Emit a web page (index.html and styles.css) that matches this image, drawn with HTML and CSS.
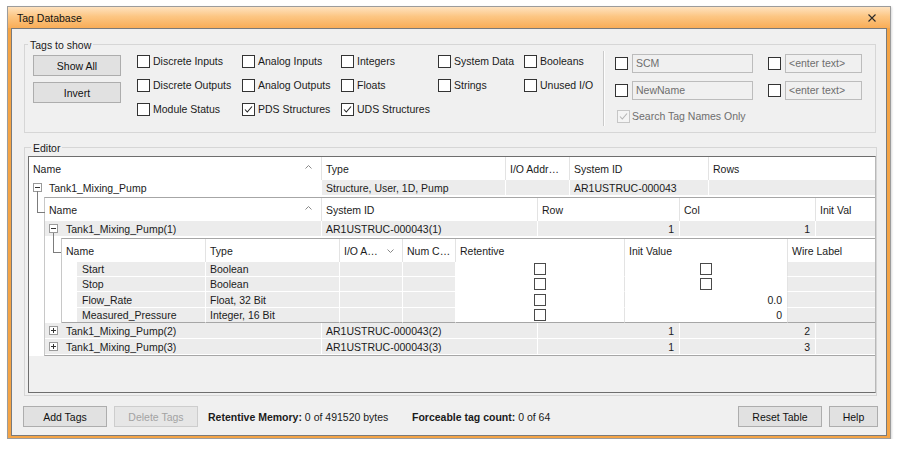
FILE: index.html
```html
<!DOCTYPE html>
<html>
<head>
<meta charset="utf-8">
<title>Tag Database</title>
<link rel="stylesheet" href="styles.css">
</head>
<body>
<div class="window">
  <div class="titlebar">
    <span class="title">Tag Database</span>
    <svg class="close" width="8" height="8" viewBox="0 0 8 8"><path d="M0.5 0.5L7.5 7.5M7.5 0.5L0.5 7.5" stroke="#2a2a2a" stroke-width="1.1"/></svg>
  </div>
  <div class="client">
    <div class="group tags">
      <div class="gtitle">Tags to show</div>
      <div class="tags-body">
        <div class="btncol">
          <button class="btn">Show All</button>
          <button class="btn">Invert</button>
        </div>
        <div class="checks">
          <label class="chk"><span class="box"></span>Discrete Inputs</label>
          <label class="chk"><span class="box"></span>Analog Inputs</label>
          <label class="chk"><span class="box"></span>Integers</label>
          <label class="chk"><span class="box"></span>System Data</label>
          <label class="chk"><span class="box"></span>Booleans</label>
          <label class="chk"><span class="box"></span>Discrete Outputs</label>
          <label class="chk"><span class="box"></span>Analog Outputs</label>
          <label class="chk"><span class="box"></span>Floats</label>
          <label class="chk"><span class="box"></span>Strings</label>
          <label class="chk"><span class="box"></span>Unused I/O</label>
          <label class="chk"><span class="box"></span>Module Status</label>
          <label class="chk"><span class="box"><svg width="11" height="11" viewBox="0 0 11 11"><path d="M2 5.5L4.3 8L9 2.5" fill="none" stroke="#222" stroke-width="1.1"/></svg></span>PDS Structures</label>
          <label class="chk"><span class="box"><svg width="11" height="11" viewBox="0 0 11 11"><path d="M2 5.5L4.3 8L9 2.5" fill="none" stroke="#222" stroke-width="1.1"/></svg></span>UDS Structures</label>
        </div>
        <div class="sep"></div>
        <div class="search">
          <div class="srow"><span class="box"></span><span class="field w1">SCM</span><span class="box gapbox"></span><span class="field w2">&lt;enter text&gt;</span></div>
          <div class="srow"><span class="box"></span><span class="field w1">NewName</span><span class="box gapbox"></span><span class="field w2">&lt;enter text&gt;</span></div>
          <div class="srow last"><span class="box dis"><svg width="11" height="11" viewBox="0 0 11 11"><path d="M2 5.5L4.3 8L9 2.5" fill="none" stroke="#b4b4b4" stroke-width="1.1"/></svg></span><span class="dimtext">Search Tag Names Only</span></div>
        </div>
      </div>
    </div>

    <div class="group editor">
      <div class="gtitle">Editor</div>
      <div class="grid">
        <div class="l1 hrow">
          <div class="hcell sorted">Name<svg width="7" height="4" viewBox="0 0 7 4"><path d="M0.5 3.5L3.5 0.5L6.5 3.5" fill="none" stroke="#888"/></svg></div>
          <div class="hcell">Type</div>
          <div class="hcell">I/O Addr…</div>
          <div class="hcell">System ID</div>
          <div class="hcell">Rows</div>
        </div>
        <div class="l1 drow">
          <div class="dcell white"><svg class="tg" width="9" height="9" viewBox="0 0 9 9"><rect x="0.5" y="0.5" width="8" height="8" fill="#fff" stroke="#9a9a9a"/><path d="M2 4.5H7" stroke="#333"/></svg>Tank1_Mixing_Pump</div>
          <div class="dcell">Structure, User, 1D, Pump</div>
          <div class="dcell"></div>
          <div class="dcell">AR1USTRUC-000043</div>
          <div class="dcell"></div>
        </div>
        <div class="detail d1">
          <div class="level2">
            <div class="l2 hrow">
              <div class="hcell sorted">Name<svg width="7" height="4" viewBox="0 0 7 4"><path d="M0.5 3.5L3.5 0.5L6.5 3.5" fill="none" stroke="#888"/></svg></div>
              <div class="hcell">System ID</div>
              <div class="hcell">Row</div>
              <div class="hcell">Col</div>
              <div class="hcell">Init Val</div>
            </div>
            <div class="l2 drow">
              <div class="dcell"><svg class="tg2" width="9" height="9" viewBox="0 0 9 9"><rect x="0.5" y="0.5" width="8" height="8" fill="#fff" stroke="#9a9a9a"/><path d="M2 4.5H7" stroke="#333"/></svg>Tank1_Mixing_Pump(1)</div>
              <div class="dcell">AR1USTRUC-000043(1)</div>
              <div class="dcell num">1</div>
              <div class="dcell num">1</div>
              <div class="dcell"></div>
            </div>
            <div class="detail d2">
              <div class="level3">
                <div class="l3 hrow">
                  <div class="hcell">Name</div>
                  <div class="hcell">Type</div>
                  <div class="hcell sorted down">I/O A…<svg width="7" height="4" viewBox="0 0 7 4"><path d="M0.5 0.5L3.5 3.5L6.5 0.5" fill="none" stroke="#888"/></svg></div>
                  <div class="hcell">Num C…</div>
                  <div class="hcell">Retentive</div>
                  <div class="hcell">Init Value</div>
                  <div class="hcell">Wire Label</div>
                </div>
                <div class="l3 drow r15">
                  <div class="dcell indent">Start</div>
                  <div class="dcell">Boolean</div>
                  <div class="dcell"></div>
                  <div class="dcell"></div>
                  <div class="dcell wcell center"><span class="gbox"></span></div>
                  <div class="dcell wcell center"><span class="gbox"></span></div>
                  <div class="dcell"></div>
                </div>
                <div class="l3 drow r15">
                  <div class="dcell indent">Stop</div>
                  <div class="dcell">Boolean</div>
                  <div class="dcell"></div>
                  <div class="dcell"></div>
                  <div class="dcell wcell center"><span class="gbox"></span></div>
                  <div class="dcell wcell center"><span class="gbox"></span></div>
                  <div class="dcell"></div>
                </div>
                <div class="l3 drow r16">
                  <div class="dcell indent">Flow_Rate</div>
                  <div class="dcell">Float, 32 Bit</div>
                  <div class="dcell"></div>
                  <div class="dcell"></div>
                  <div class="dcell wcell center"><span class="gbox"></span></div>
                  <div class="dcell wcell num">0.0</div>
                  <div class="dcell"></div>
                </div>
                <div class="l3 drow r15 lastrow">
                  <div class="dcell indent">Measured_Pressure</div>
                  <div class="dcell">Integer, 16 Bit</div>
                  <div class="dcell"></div>
                  <div class="dcell"></div>
                  <div class="dcell wcell center"><span class="gbox"></span></div>
                  <div class="dcell wcell num">0</div>
                  <div class="dcell"></div>
                </div>
              </div>
            </div>
            <div class="l2 drow">
              <div class="dcell"><svg class="tg2" width="9" height="9" viewBox="0 0 9 9"><rect x="0.5" y="0.5" width="8" height="8" fill="#fff" stroke="#9a9a9a"/><path d="M2 4.5H7M4.5 2V7" stroke="#333"/></svg>Tank1_Mixing_Pump(2)</div>
              <div class="dcell">AR1USTRUC-000043(2)</div>
              <div class="dcell num">1</div>
              <div class="dcell num">2</div>
              <div class="dcell"></div>
            </div>
            <div class="l2 drow">
              <div class="dcell"><svg class="tg2" width="9" height="9" viewBox="0 0 9 9"><rect x="0.5" y="0.5" width="8" height="8" fill="#fff" stroke="#9a9a9a"/><path d="M2 4.5H7M4.5 2V7" stroke="#333"/></svg>Tank1_Mixing_Pump(3)</div>
              <div class="dcell">AR1USTRUC-000043(3)</div>
              <div class="dcell num">1</div>
              <div class="dcell num">3</div>
              <div class="dcell"></div>
            </div>
          </div>
        </div>
      </div>
    </div>

    <div class="bottombar">
      <button class="btn bb">Add Tags</button>
      <button class="btn bb disabled">Delete Tags</button>
      <span class="info info1"><b>Retentive Memory:</b> 0 of 491520 bytes</span>
      <span class="info"><b>Forceable tag count:</b> 0 of 64</span>
      <button class="btn bb reset">Reset Table</button>
      <button class="btn help">Help</button>
    </div>
  </div>
</div>
</body>
</html>
```

FILE: styles.css
```css
* { box-sizing: border-box; }

body {
  margin: 0;
  background: #ffffff;
  font-family: "Liberation Sans", Arial, sans-serif;
  font-size: 10.5px;
  color: #1b1b1b;
}

.window {
  margin: 6px 0 0 7px;
  width: 884px;
  height: 433px;
  border: 1px solid #9c9c9c;
  background: #f4a446;
  display: flex;
  flex-direction: column;
  box-shadow: 1px 1px 2px rgba(0,0,0,0.15);
}

.titlebar {
  height: 21px;
  flex: none;
  background: linear-gradient(#fee2bf, #fcc683 45%, #f9ad57);
  display: flex;
  align-items: center;
  padding-left: 9px;
}

.title { flex: 1; color: #111; }

.close { margin-right: 14px; }

.client {
  flex: 1;
  margin: 0 3px 2px 3px;
  border: 1px solid #7a7a7a;
  background: #f0f0f0;
  display: flex;
  flex-direction: column;
}

.group {
  border: 1px solid #d6d6d6;
  margin-left: 12px;
  flex: none;
}

.gtitle {
  margin: -6px 0 0 3px;
  padding: 0 2px;
  background: #f0f0f0;
  line-height: 12px;
  width: max-content;
  color: #1b1b1b;
}

.tags {
  margin-top: 15px;
  width: 852px;
  height: 89px;
}

.tags-body {
  display: flex;
  margin-top: 4px;
  padding-left: 8px;
}

.btncol {
  display: flex;
  flex-direction: column;
  gap: 6px;
  width: 88px;
}

.btn {
  height: 21px;
  border: 1px solid #adadad;
  background: #e1e1e1;
  font: inherit;
  color: #111;
  padding: 0;
}

.checks {
  margin-left: 16px;
  display: grid;
  grid-template-columns: 105px 99px 97px 86px 79px;
  grid-auto-rows: 24px;
}

.chk {
  display: flex;
  align-items: flex-start;
  gap: 3px;
  line-height: 13px;
  white-space: nowrap;
}

.box {
  width: 13px;
  height: 13px;
  flex: none;
  border: 1px solid #333;
  background: #fff;
  display: flex;
  align-items: center;
  justify-content: center;
}

.box.dis {
  border-color: #c6c6c6;
  background: #f4f4f4;
}

.sep {
  width: 2px;
  height: 75px;
  margin-top: -4px;
  border-left: 1px solid #cacaca;
  border-right: 1px solid #fdfdfd;
}

.search {
  margin-left: 10px;
  margin-top: -1px;
  display: flex;
  flex-direction: column;
  gap: 8px;
}

.srow {
  display: flex;
  align-items: center;
  height: 19px;
}

.srow.last {
  height: 13px;
  margin-top: 2px;
  padding-left: 2px;
}

.field {
  height: 19px;
  margin-left: 4px;
  border: 1px solid #bcbcbc;
  background: #f0f0f0;
  color: #6e6e6e;
  padding-left: 3px;
  line-height: 17px;
  white-space: nowrap;
}

.w1 { width: 121px; }
.w2 { width: 77px; }
.gapbox { margin-left: 15px; }

.dimtext {
  margin-left: 2px;
  color: #6e6e6e;
  line-height: 13px;
}

/* Editor */
.editor {
  margin-top: 14px;
  width: 853px;
  height: 249px;
  padding: 0 0 2px 3px;
}

.grid {
  margin-top: 2px;
  height: 237px;
  border: 1px solid #6e6e6e;
  border-right-color: #b8b8b8;
  background: #f0f0f0;
  overflow: hidden;
}

.hrow, .drow { display: grid; }

.l1 { grid-template-columns: 293px 184px 64px 139px 1fr; }
.l2 { grid-template-columns: 277px 216px 142px 136px 1fr; }
.l3 { grid-template-columns: 144px 134px 63px 53px 169px 163px 1fr; }

.hcell {
  height: 23px;
  background: #fff;
  border-right: 1px solid #e3e3e3;
  padding-left: 4px;
  display: flex;
  align-items: center;
  white-space: nowrap;
  overflow: hidden;
}

.hcell:last-child { border-right: none; }

.hcell.sorted {
  justify-content: space-between;
  padding-right: 9px;
}

.hcell.sorted svg { margin-top: -3px; }
.hcell.down { padding-right: 8px; }
.hcell.down svg { margin-top: 0; }

.dcell {
  height: 16px;
  background: #ececec;
  border-right: 1px solid #fff;
  border-bottom: 1px solid #fff;
  padding: 0 4px;
  display: flex;
  align-items: center;
  white-space: nowrap;
  overflow: hidden;
}

.dcell:last-child { border-right: none; }

.dcell.white { background: #fff; }

.dcell.num { justify-content: flex-end; padding-right: 5px; }
.dcell.center { justify-content: center; }

.wcell {
  background: #fff;
  border-right-color: #e3e3e3;
}

.tg { margin-right: 7px; flex: none; }
.tg2 { margin-right: 8px; flex: none; }

.detail {
  background: #fff;
  padding-top: 1px;
  position: relative;
}

.detail::before {
  content: "";
  position: absolute;
  left: 8px;
  border-left: 1px solid #7c7c7c;
  border-bottom: 1px solid #7c7c7c;
  width: 7px;
}

.d1 { padding-left: 15px; }
.d1::before { top: -5px; height: 21px; }

.d2 { padding-left: 16px; }
.d2::before { top: -4px; height: 19px; }

.level2 {
  border-top: 1px solid #a6a6a6;
  border-left: 1px solid #c8c8c8;
  border-bottom: 1px solid #a6a6a6;
}

.level3 {
  border-top: 1px solid #a6a6a6;
  border-left: 1px solid #c8c8c8;
}

.r15 .dcell { height: 15px; }
.r16 .dcell { height: 16px; }

.lastrow .dcell { border-bottom-color: #a6a6a6; }

.dcell.indent {
  background: linear-gradient(90deg, #fff 0 15px, #ececec 15px);
  padding-left: 20px;
}

.gbox {
  width: 12px;
  height: 12px;
  border: 1px solid #4a4a4a;
  background: #fff;
}

/* bottom bar */
.bottombar {
  display: flex;
  align-items: center;
  margin: 10px 8px 0 11px;
  height: 21px;
}

.bb { width: 84px; }
.bb.disabled {
  margin-left: 7px;
  color: #a3a3a3;
  background: #e6e6e6;
  border-color: #cdcdcd;
}

.info { white-space: nowrap; color: #1b1b1b; }
.info b { font-weight: bold; }
.info1 { margin-left: 10px; width: 204px; }

.reset { margin-left: auto; }
.help { width: 49px; margin-left: 7px; }
```
